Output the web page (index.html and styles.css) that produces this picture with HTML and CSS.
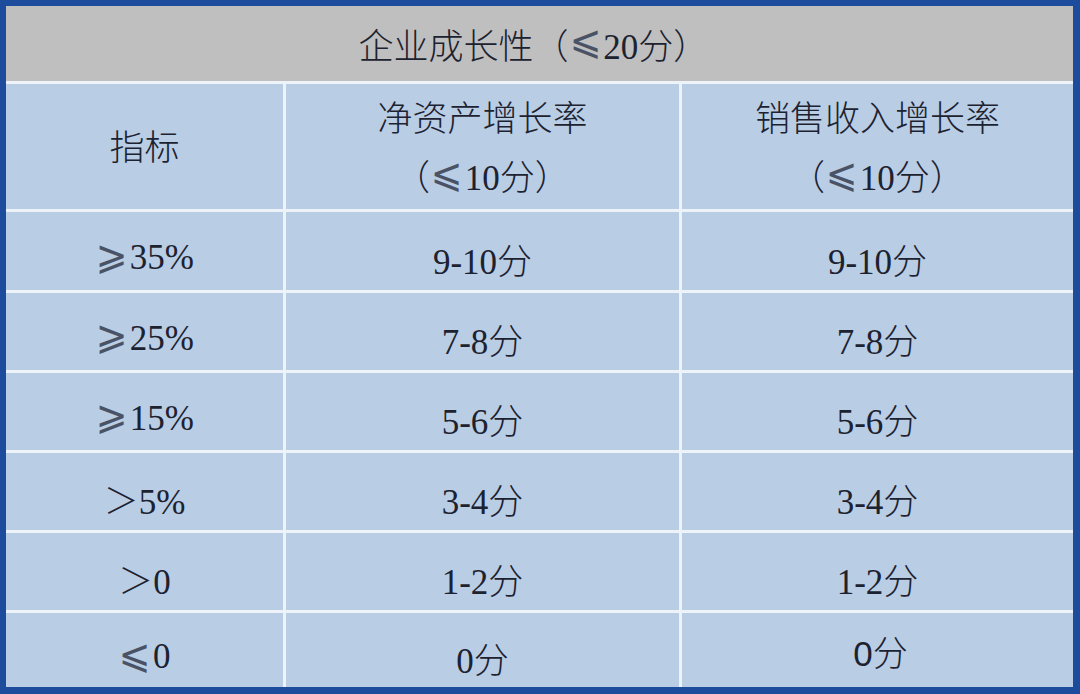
FILE: index.html
```html
<!DOCTYPE html>
<html lang="zh-CN">
<head>
<meta charset="utf-8">
<title>企业成长性</title>
<link rel="stylesheet" href="styles.css">
</head>
<body>
<div class="frame">
  <div class="grid">
    <div class="cell title">企业成长性（<span class="sym">⩽</span>20分）</div>

    <div class="cell head">指标</div>
    <div class="cell head two"><span>净资产增长率</span><span>（<span class="sym">⩽</span>10分）</span></div>
    <div class="cell head two"><span>销售收入增长率</span><span>（<span class="sym">⩽</span>10分）</span></div>

    <div class="cell"><span class="sym">⩾</span>35%</div>
    <div class="cell">9-10分</div>
    <div class="cell">9-10分</div>

    <div class="cell"><span class="sym">⩾</span>25%</div>
    <div class="cell">7-8分</div>
    <div class="cell">7-8分</div>

    <div class="cell"><span class="sym">⩾</span>15%</div>
    <div class="cell">5-6分</div>
    <div class="cell">5-6分</div>

    <div class="cell">＞5%</div>
    <div class="cell">3-4分</div>
    <div class="cell">3-4分</div>

    <div class="cell">＞0</div>
    <div class="cell">1-2分</div>
    <div class="cell">1-2分</div>

    <div class="cell"><span class="sym">⩽</span>0</div>
    <div class="cell">0分</div>
    <div class="cell sans">0分</div>
  </div>
</div>
</body>
</html>
```

FILE: styles.css
```css
html, body {
  margin: 0;
  padding: 0;
  background: #1e4c9c;
}

.frame {
  width: 1080px;
  height: 694px;
  box-sizing: border-box;
  border-style: solid;
  border-color: #1e4c9c;
  border-width: 6px 7px 7px 6px;
  background: #1e4c9c;
}

.grid {
  display: grid;
  grid-template-columns: 277px 393px 391px;
  grid-template-rows: 75px 125px 78px 77px 77px 77px 77px 74px;
  gap: 3px;
  background: #eef3f9;
  height: 100%;
}

.cell {
  background: #b9cde5;
  color: #1c2230;
  font-family: "Liberation Serif", "Noto Sans CJK SC", serif;
  font-size: 35px;
  font-weight: 300;
  display: flex;
  align-items: center;
  justify-content: center;
  padding-top: 14px;
  box-sizing: border-box;
  white-space: pre;
}

.sym {
  font-family: "DejaVu Sans", sans-serif;
  font-weight: 400;
  font-size: 1.15em;
  line-height: 1;
  color: #4a5366;
  display: inline-block;
  transform: translateY(-3px) scaleX(0.95);
  margin-right: 1px;
}

.title {
  grid-column: 1 / 4;
  background: #bfbfbf;
  padding-top: 0;
  padding-right: 12px;
}

.head {
  padding-top: 0;
  padding-bottom: 4px;
}

.head.two {
  flex-direction: column;
  gap: 8px;
  padding-top: 0;
}

.sans {
  font-family: "Liberation Sans", "Noto Sans CJK SC", sans-serif;
  font-weight: 300;
  padding-top: 0;
  padding-left: 6px;
}
```
